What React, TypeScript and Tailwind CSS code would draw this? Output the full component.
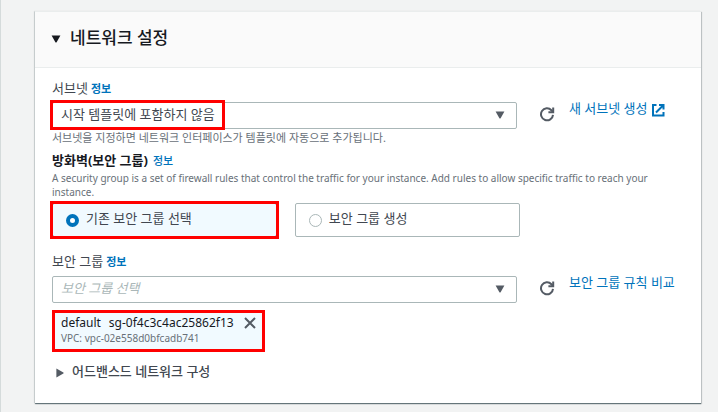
import React, { useState } from 'react';

const RefreshIcon = () => (
  <svg viewBox="0 0 16 16" className="size-4" fill="none" stroke="#545b64" strokeWidth="2" aria-hidden="true">
    <path d="M14 8.8A6 6 0 1 1 12.4 4.2L14 6" />
    <path d="M14.2 1.4V6.2H9.4" />
  </svg>
);

const ExternalIcon = () => (
  <svg viewBox="0 0 14 14" className="mt-1 size-3.5 shrink-0" fill="none" stroke="#0073bb" strokeWidth="2" aria-hidden="true">
    <path d="M5.5 2H2v10.5h10.5V9" />
    <path d="M8 2h4.5v4.5M12.5 2L5 9.5" />
  </svg>
);

const CaretDown = ({ className }: { className: string }) => (
  <svg viewBox="0 0 10 8" className={className} fill="currentColor" aria-hidden="true">
    <path d="M.6.4h8.8L5.6 7.2Q5 8 4.4 7.2Z" />
  </svg>
);

const InfoLink = ({ className = 'font-bold' }: { className?: string }) => (
  <a href="#" className={`text-[11px] text-[#0073bb] ${className}`}>
    정보
  </a>
);

// Red annotation frame drawn over the parent
const Frame = ({ className }: { className: string }) => (
  <div className={`pointer-events-none absolute border-3 border-[#f00] ${className}`} />
);

const SelectBox = ({ id, text, className = '' }: { id: string; text: string; className?: string }) => (
  <div className="relative flex-1">
    <select
      id={id}
      className={`block h-[27px] w-full appearance-none rounded-xs border border-[#aab7b8] bg-white pr-8 pb-1 pl-2 text-[13px] leading-5 ${className}`}
    >
      <option>{text}</option>
    </select>
    <CaretDown className="pointer-events-none absolute top-[9px] right-3 h-2 w-[10px] text-[#545b64]" />
  </div>
);

const RefreshButton = () => (
  <button type="button" aria-label="새로 고침" className="ml-[22px] mt-1">
    <RefreshIcon />
  </button>
);

const tiles = [
  { value: 'existing', label: '기존 보안 그룹 선택' },
  { value: 'create', label: '보안 그룹 생성' },
];

export default function App() {
  const [mode, setMode] = useState('existing');
  const [open, setOpen] = useState(true);
  const [selected, setSelected] = useState(true);

  return (
    <div className="min-h-screen border-l border-[#d5dbdb] bg-[#f2f3f3] pt-[11px] pr-[17px] pb-2 pl-[34px] font-['Noto_Sans','Noto_Sans_CJK_KR',sans-serif] text-[13px] leading-5 text-[#414750]">
      <section className="border-t border-[#eaeded] bg-white pb-[22px] shadow-[0_1px_1px_0_rgba(0,28,36,0.5),1px_1px_1px_0_rgba(0,28,36,0.15),-1px_0_1px_0_rgba(0,28,36,0.1)]">
        <header className="border-b border-[#eaeded] bg-[#fafafa] px-4 pt-[14px] pb-[17px]">
          <h2 className="text-[17px] leading-6 font-medium text-[#16191f]">
            <button type="button" className="flex items-center gap-[9px]" onClick={() => setOpen(!open)}>
              <CaretDown className="mt-0.5 h-2 w-[10px]" />
              네트워크 설정
            </button>
          </h2>
        </header>

        {open && (
          <div className="px-[17px] pt-[10px]">
            <div className="flex items-baseline gap-[3px]">
              <label htmlFor="subnet">서브넷</label>
              <InfoLink />
            </div>
            <div className="mt-[3px] flex items-start">
              <div className="relative flex-1">
                <SelectBox id="subnet" text="시작 템플릿에 포함하지 않음" />
                <Frame className="-top-0.5 -left-0.5 h-[30px] w-[175px]" />
              </div>
              <RefreshButton />
              <a href="#" className="-mt-1 ml-[14px] flex w-[115px] items-center gap-[3px] text-[#0073bb]">
                새 서브넷 생성
                <ExternalIcon />
              </a>
            </div>
            <p className="pt-px text-[11px] leading-4 text-[#687078]">
              서브넷을 지정하면 네트워크 인터페이스가 템플릿에 자동으로 추가됩니다.
            </p>

            <fieldset className="mt-1">
              <legend className="flex items-baseline gap-[5px] font-bold text-[#16191f]">
                방화벽(보안 그룹)
                <InfoLink className="font-medium" />
              </legend>
              <p className="text-[10px] leading-[14px] text-[#687078]">
                A security group is a set of firewall rules that control the traffic for your instance. Add rules to
                allow specific traffic to reach your instance.
              </p>
              <div className="mt-1 grid w-[74%] grid-cols-2 gap-[18px]">
                {tiles.map(({ value, label }) => (
                  <div key={value} className="relative">
                    <label
                      className={`flex h-[34px] items-center gap-[7px] rounded-xs border pl-[13px] ${
                        mode === value ? 'border-[#00a1c9] bg-[#f1faff]' : 'border-[#aab7b8] bg-white'
                      }`}
                    >
                      <input
                        type="radio"
                        name="firewall"
                        checked={mode === value}
                        onChange={() => setMode(value)}
                        className="size-[13px] appearance-none rounded-full border border-[#aab7b8] bg-white checked:border-4 checked:border-[#0073bb]"
                      />
                      <span className="pb-1">{label}</span>
                    </label>
                    {value === 'existing' && <Frame className="-inset-0.5" />}
                  </div>
                ))}
              </div>
            </fieldset>

            <div className="mt-[14px] flex items-baseline gap-[3px]">
              <label htmlFor="group">보안 그룹</label>
              <InfoLink />
            </div>
            <div className="mt-1 flex items-start">
              <SelectBox id="group" text="보안 그룹 선택" className="text-[#aab7b8] italic" />
              <RefreshButton />
              <a href="#" className="-mt-1 ml-[14px] w-[115px] text-[#0073bb]">
                보안 그룹 규칙 비교
              </a>
            </div>

            {selected && (
              <div className="relative mt-[7px] flex w-fit items-start gap-[10px] bg-[#f1faff] pt-[5px] pr-[9px] pb-[7px] pl-[9px]">
                <div>
                  <div className="flex gap-2 text-[12px] leading-4 text-[#16191f]">
                    <span>default</span>
                    <span>sg-0f4c3c4ac25862f13</span>
                  </div>
                  <div className="text-[10px] leading-[14px] text-[#687078]">VPC: vpc-02e558d0bfcadb741</div>
                </div>
                <button type="button" aria-label="제거" className="mt-0.5" onClick={() => setSelected(false)}>
                  <svg viewBox="0 0 12 12" className="size-3" stroke="#545b64" strokeWidth="2" aria-hidden="true">
                    <path d="M1 1l10 10M11 1L1 11" />
                  </svg>
                </button>
                <Frame className="inset-0" />
              </div>
            )}

            <button type="button" className="mt-[9px] flex items-center gap-2 pl-1 font-medium">
              <svg viewBox="0 0 8 10" className="mt-1 h-[10px] w-2" fill="#545b64" aria-hidden="true">
                <path d="M.4.6v8.8L7.4 5.5Q8 5 7.4 4.5Z" />
              </svg>
              어드밴스드 네트워크 구성
            </button>
          </div>
        )}
      </section>
    </div>
  );
}
